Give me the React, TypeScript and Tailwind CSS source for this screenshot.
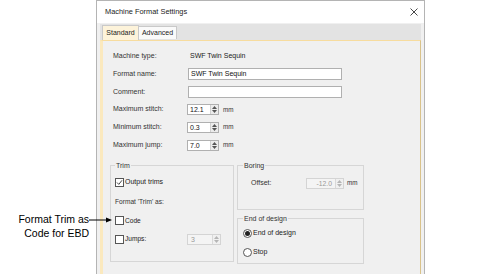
import React from "react";

const font = { fontFamily: '"Liberation Sans", Arial, sans-serif' };

function Spinner({ disabled = false }: { disabled?: boolean }) {
  const c = disabled ? "#b5b5b5" : "#555";
  return (
    <div className={`w-[8px] h-full flex flex-col items-center justify-center gap-[1px] border-l ${disabled ? "border-[#d9d9d9] bg-[#f0f0f0]" : "border-[#d0d0d0] bg-[#ececec]"}`}>
      <svg width="5" height="3" viewBox="0 0 5 3"><path d="M0 3 L2.5 0 L5 3Z" fill={c} /></svg>
      <svg width="5" height="3" viewBox="0 0 5 3"><path d="M0 0 L2.5 3 L5 0Z" fill={c} /></svg>
    </div>
  );
}

function SpinBox({ value }: { value: string }) {
  return (
    <div className="flex items-center">
      <div className="flex h-[11px] w-[32px] border border-[#b0b0b0] bg-white">
        <div className="flex-1 pl-[2px] leading-[9px] text-[7px] text-[#111]">{value}</div>
        <Spinner />
      </div>
      <span className="ml-[4px] text-[6.3px] text-[#333]">mm</span>
    </div>
  );
}

function Row({ label, children, h = "h-[18px]" }: { label: string; children?: React.ReactNode; h?: string }) {
  return (
    <div className={`flex items-center ${h}`}>
      <div className="w-[85px] pl-[10px] text-[7px] text-[#333]">{label}</div>
      {children}
    </div>
  );
}

function CheckBox({ checked = false }: { checked?: boolean }) {
  return (
    <div className="w-[9px] h-[9px] border border-[#555] bg-white flex items-center justify-center">
      {checked && (
        <svg width="7" height="7" viewBox="0 0 7 7">
          <path d="M1 3.5 L2.8 5.4 L6 1.3" fill="none" stroke="#333" strokeWidth="0.9" />
        </svg>
      )}
    </div>
  );
}

function Radio({ checked = false }: { checked?: boolean }) {
  return (
    <div className="w-[9px] h-[9px] rounded-full border border-[#555] bg-white flex items-center justify-center">
      {checked && <div className="w-[5px] h-[5px] rounded-full bg-[#222]" />}
    </div>
  );
}

export default function App() {
  return (
    <div className="relative flex w-[485px] h-[274px] bg-white overflow-hidden" style={font}>
      <div className="w-[96px]" />
      <div className="w-[329px] h-full flex flex-col border-x border-t border-[#b4b4b4] bg-[#f0f0f0]">
        <div className="h-[22px] bg-white flex items-center justify-between pl-[8px] pr-[6px]">
          <span className="text-[7.4px] text-[#222]">Machine Format Settings</span>
          <svg width="8" height="8" viewBox="0 0 8 8">
            <path d="M0.5 0.5 L7.5 7.5 M7.5 0.5 L0.5 7.5" stroke="#333" strokeWidth="0.9" />
          </svg>
        </div>
        <div className="flex-1 flex flex-col mx-[3px] mt-[1px]">
          <div className="h-[16px] bg-[#e3e3e3] flex items-end pl-[2px]">
            <div className="h-[15px] w-[37px] flex items-center justify-center border-x border-t border-[#c9c9c9] bg-[#fdf3da] text-[7px] text-[#222]">
              Standard
            </div>
            <div className="h-[13px] w-[38px] mb-[1px] flex items-center justify-center border-r border-t border-[#c9c9c9] bg-[#fafafa] text-[7px] text-[#222]">
              Advanced
            </div>
          </div>
          <div className="flex-1 border-l-[3px] border-t border-r border-l-[#fbe9be] border-t-[#f7dc9e] border-r-[#d9c28a] bg-[#f0f0f0] pt-[6px]">
            <Row label="Machine type:">
              <span className="pl-[2px] text-[7px] text-[#222]">SWF Twin Sequin</span>
            </Row>
            <Row label="Format name:">
              <div className="h-[12px] w-[154px] border border-[#b0b0b0] bg-white pl-[2px] leading-[10px] text-[7px] text-[#111]">
                SWF Twin Sequin
              </div>
            </Row>
            <Row label="Comment:">
              <div className="h-[12px] w-[154px] border border-[#b0b0b0] bg-white" />
            </Row>
            <Row label="Maximum stitch:" h="h-[17px]">
              <div className="-ml-[1px]"><SpinBox value="12.1" /></div>
            </Row>
            <Row label="Minimum stitch:">
              <div className="-ml-[1px]"><SpinBox value="0.3" /></div>
            </Row>
            <Row label="Maximum jump:">
              <div className="-ml-[1px]"><SpinBox value="7.0" /></div>
            </Row>

            <div className="flex mt-[7px] pl-[7px] gap-[3px] items-start">
              <fieldset className="w-[124px] border border-[#d6d6d6] px-[4px] pb-[13px]">
                <legend className="px-[1px] text-[7px] leading-[9px] text-[#333]">Trim</legend>
                <div className="mt-[3px] h-[18px] flex items-center gap-[1px]">
                  <CheckBox checked />
                  <span className="text-[7px] text-[#222]">Output trims</span>
                </div>
                <div className="mt-[2px] h-[18px] flex items-center text-[6.6px] text-[#333]">Format 'Trim' as:</div>
                <div className="h-[19px] flex items-center gap-[1px]">
                  <CheckBox />
                  <span className="text-[6.6px] text-[#222]">Code</span>
                </div>
                <div className="h-[18px] flex items-center">
                  <CheckBox />
                  <span className="ml-[1px] w-[62px] text-[6.6px] text-[#222]">Jumps:</span>
                  <div className="flex h-[11px] w-[34px] border border-[#d4d4d4] bg-[#f4f4f4]">
                    <div className="flex-1 pl-[3px] leading-[9px] text-[7px] text-[#999]">3</div>
                    <Spinner disabled />
                  </div>
                </div>
              </fieldset>
              <div className="flex flex-col gap-[4px]">
                <fieldset className="w-[127px] border border-[#d6d6d6] px-[5px] pb-[20px]">
                  <legend className="px-[1px] text-[7px] leading-[9px] text-[#333]">Boring</legend>
                  <div className="mt-[7px] h-[12px] flex items-center">
                    <span className="ml-[8px] w-[55px] text-[7px] text-[#333]">Offset:</span>
                    <div className="flex h-[11px] w-[38px] border border-[#d4d4d4] bg-[#f4f4f4]">
                      <div className="flex-1 pr-[3px] text-right leading-[9px] text-[6.8px] text-[#999]">-12.0</div>
                      <Spinner disabled />
                    </div>
                    <span className="ml-[3px] text-[6.3px] text-[#333]">mm</span>
                  </div>
                </fieldset>
                <fieldset className="w-[127px] border border-[#d6d6d6] px-[5px] pb-[1px]">
                  <legend className="px-[1px] text-[7px] leading-[9px] text-[#333]">End of design</legend>
                  <div className="mt-[1px] h-[19px] flex items-center gap-[1px]">
                    <Radio checked />
                    <span className="text-[7px] text-[#222]">End of design</span>
                  </div>
                  <div className="h-[19px] flex items-center gap-[1px]">
                    <Radio />
                    <span className="text-[7px] text-[#222]">Stop</span>
                  </div>
                </fieldset>
              </div>
            </div>
          </div>
        </div>
      </div>
      <div className="flex-1" />

      <div className="absolute left-[10px] top-[212px] flex items-start">
        <div className="w-[79px] text-right text-[10.5px] leading-[14px] text-black">
          <div>Format Trim as</div>
          <div>Code for EBD</div>
        </div>
        <svg width="24" height="6" viewBox="0 0 24 6" className="mt-[5px]">
          <path d="M0 3 L19 3" stroke="#000" strokeWidth="1" />
          <path d="M17 0.5 L23 3 L17 5.5Z" fill="#000" />
        </svg>
      </div>
    </div>
  );
}
